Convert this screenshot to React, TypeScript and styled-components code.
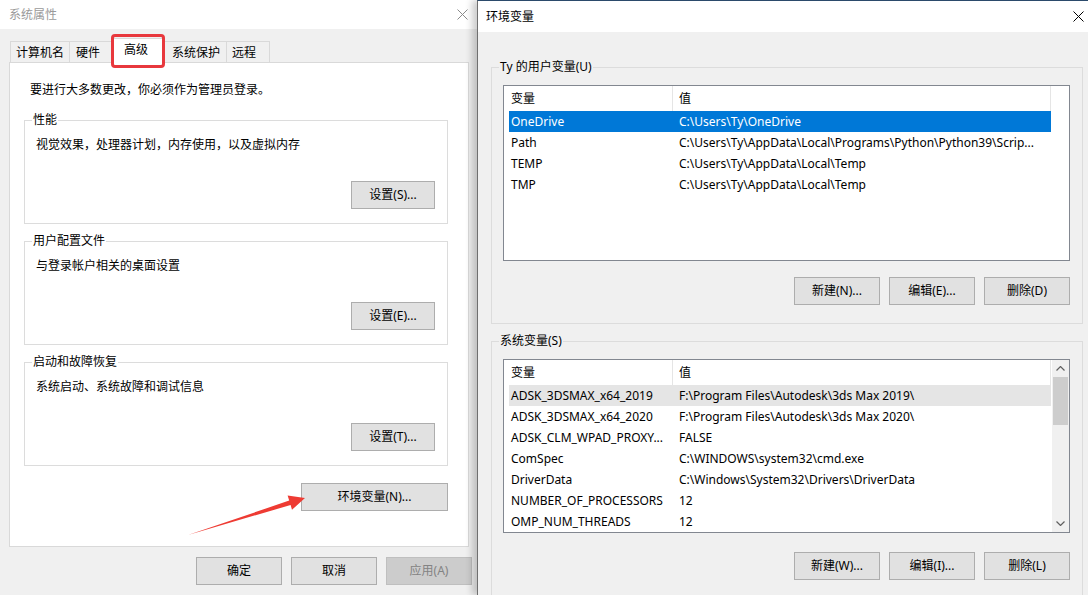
import { FC } from 'react';
import styled, { createGlobalStyle } from 'styled-components';

const GlobalStyle = createGlobalStyle`
  html, body {
    margin: 0;
    padding: 0;
  }
  body {
    font-family: "Noto Sans", "Noto Sans CJK SC", sans-serif;
    font-size: 12px;
    line-height: 16px;
    color: #000;
    background: #f0f0f0;
  }
`;

const Screen = styled.div`
  position: relative;
  display: flex;
  width: 1088px;
  height: 595px;
  overflow: hidden;
  background: #f0f0f0;
`;

const AnnotationLayer = styled.svg`
  position: absolute;
  left: 0;
  top: 0;
  width: 1088px;
  height: 595px;
  pointer-events: none;
  z-index: 5;
`;

/* ---------- window chrome ---------- */

const TitleBar = styled.div<{ $height: number; $inactive?: boolean; $right: number; $left: number }>`
  flex: none;
  height: ${({ $height }) => $height}px;
  display: flex;
  align-items: center;
  justify-content: space-between;
  padding: 0 ${({ $right }) => $right}px 0 ${({ $left }) => $left}px;
  background: #fff;
  color: ${({ $inactive }) => ($inactive ? '#9a9a9a' : '#000')};
`;

const CloseIcon: FC<{ color: string }> = ({ color }) => (
  <svg width="11" height="11" viewBox="0 0 11 11">
    <path d="M0.5 0.5 L10.5 10.5 M10.5 0.5 L0.5 10.5" stroke={color} strokeWidth="1" fill="none" />
  </svg>
);

const Button = styled.button<{ $width: number }>`
  box-sizing: border-box;
  flex: none;
  width: ${({ $width }) => $width}px;
  height: 28px;
  padding: 0;
  border: 1px solid #adadad;
  background: #e1e1e1;
  font: inherit;
  color: #000;
  line-height: 16px;

  &:disabled {
    background: #cccccc;
    border-color: #bfbfbf;
    color: #838383;
  }
`;

const GroupBox = styled.fieldset<{ $pad: string }>`
  box-sizing: border-box;
  margin: 0;
  min-width: 0;
  border: 1px solid #dcdcdc;
  padding: ${({ $pad }) => $pad};
  display: flex;
  flex-direction: column;
`;

const GroupLegend = styled.legend`
  padding: 0 1px;
  margin-left: -4px;
  height: 16px;
  line-height: 16px;
`;

const ButtonRow = styled.div<{ $top: number; $gap: number }>`
  display: flex;
  justify-content: flex-end;
  gap: ${({ $gap }) => $gap}px;
  margin-top: ${({ $top }) => $top}px;
`;

/* ---------- system properties (left) ---------- */

const LeftWindow = styled.section`
  flex: none;
  width: 477px;
  display: flex;
  flex-direction: column;
  background: #f0f0f0;
`;

const LeftBody = styled.div`
  display: flex;
  flex-direction: column;
  padding: 9px 5px 0 9px;
`;

const TabStrip = styled.div`
  display: flex;
  align-items: flex-start;
  height: 24px;
  padding-left: 1px;
`;

const Tab = styled.div<{ $width: number; $pad: number; $overlap: number; $active?: boolean }>`
  box-sizing: border-box;
  position: relative;
  z-index: ${({ $active }) => ($active ? 2 : 1)};
  width: ${({ $width }) => $width}px;
  height: ${({ $active }) => ($active ? 25 : 21)}px;
  margin: ${({ $active, $overlap }) => ($active ? '0' : `3px -${$overlap}px 0 0`)};
  border: 1px solid #d9d9d9;
  border-bottom: none;
  background: ${({ $active }) => ($active ? '#fff' : '#f0f0f0')};
  display: flex;
  align-items: center;
  padding: ${({ $active, $pad }) => ($active ? `0 0 3px ${$pad}px` : `1px 0 0 ${$pad}px`)};
  white-space: nowrap;

  ${({ $active }) =>
    $active &&
    `
    &::after {
      content: '';
      position: absolute;
      left: -3px;
      right: -3px;
      top: -5px;
      bottom: -5px;
      border: 3px solid #e8383d;
      border-radius: 4px;
    }
  `}
`;

const TabPanel = styled.div`
  box-sizing: border-box;
  width: 460px;
  height: 485px;
  background: #fff;
  border: 1px solid #d9d9d9;
  padding: 19px 0 0 14px;
  display: flex;
  flex-direction: column;
`;

const Notice = styled.div`
  margin: 0 0 14px 6px;
  height: 16px;
`;

const GroupStack = styled.div`
  width: 424px;
  display: flex;
  flex-direction: column;
  gap: 9px;
`;

const GroupText = styled.div`
  height: 16px;
  white-space: nowrap;
`;

/* ---------- environment variables (right) ---------- */

const RightWindow = styled.section`
  position: relative;
  z-index: 3;
  flex: 1;
  display: flex;
  flex-direction: column;
  border-left: 1px solid #6f6f6f;
  border-top: 1px solid #2b4a6b;
  background: #f0f0f0;
  box-shadow: -5px 0 7px rgba(0, 0, 0, 0.2);
  overflow: hidden;
`;

const RightBody = styled.div`
  display: flex;
  flex-direction: column;
  gap: 9px;
  padding: 27px 0 0 13px;
`;

const ListBox = styled.div<{ $height: number }>`
  box-sizing: border-box;
  height: ${({ $height }) => $height}px;
  border: 1px solid #828790;
  background: #fff;
  display: flex;
  overflow: hidden;
`;

const ListContent = styled.div`
  flex: 1;
  min-width: 0;
`;

const ListHeader = styled.div`
  display: flex;
  height: 25px;
`;

const HeaderCell = styled.div<{ $width: number; $pad: number }>`
  box-sizing: border-box;
  width: ${({ $width }) => $width}px;
  padding: 1px 0 0 ${({ $pad }) => $pad}px;
  border-right: 1px solid #e5e5e5;
  line-height: 24px;
`;

type RowState = 'none' | 'active' | 'muted';

const Row = styled.div<{ $state: RowState }>`
  display: flex;
  width: 542px;
  height: 21px;
  margin-left: 5px;
  line-height: 21px;
  white-space: nowrap;
  background: ${({ $state }) =>
    $state === 'active' ? '#0078d7' : $state === 'muted' ? '#e5e5e5' : 'transparent'};
  color: ${({ $state }) => ($state === 'active' ? '#fff' : '#000')};
`;

const Cell = styled.div<{ $width: number; $pad: number }>`
  box-sizing: border-box;
  width: ${({ $width }) => $width}px;
  padding-left: ${({ $pad }) => $pad}px;
  overflow: hidden;
`;

const ScrollBar = styled.div`
  flex: none;
  width: 17px;
  background: #f0f0f0;
  display: flex;
  flex-direction: column;
`;

const ScrollArrow = styled.div`
  height: 17px;
  display: flex;
  align-items: center;
  justify-content: center;
`;

const ScrollThumb = styled.div`
  height: 48px;
  margin: 0 1px;
  background: #cdcdcd;
`;

const ScrollTrack = styled.div`
  flex: 1;
`;

const Chevron: FC<{ down?: boolean }> = ({ down }) => (
  <svg width="9" height="5" viewBox="0 0 9 5">
    <path
      d={down ? 'M0.5 0.5 L4.5 4.5 L8.5 0.5' : 'M0.5 4.5 L4.5 0.5 L8.5 4.5'}
      stroke="#606060"
      strokeWidth="1.2"
      fill="none"
    />
  </svg>
);

interface EnvVar {
  name: string;
  value: string;
  state?: RowState;
}

const userVars: EnvVar[] = [
  { name: 'OneDrive', value: 'C:\\Users\\Ty\\OneDrive', state: 'active' },
  { name: 'Path', value: 'C:\\Users\\Ty\\AppData\\Local\\Programs\\Python\\Python39\\Scrip...' },
  { name: 'TEMP', value: 'C:\\Users\\Ty\\AppData\\Local\\Temp' },
  { name: 'TMP', value: 'C:\\Users\\Ty\\AppData\\Local\\Temp' },
];

const systemVars: EnvVar[] = [
  { name: 'ADSK_3DSMAX_x64_2019', value: 'F:\\Program Files\\Autodesk\\3ds Max 2019\\', state: 'muted' },
  { name: 'ADSK_3DSMAX_x64_2020', value: 'F:\\Program Files\\Autodesk\\3ds Max 2020\\' },
  { name: 'ADSK_CLM_WPAD_PROXY...', value: 'FALSE' },
  { name: 'ComSpec', value: 'C:\\WINDOWS\\system32\\cmd.exe' },
  { name: 'DriverData', value: 'C:\\Windows\\System32\\Drivers\\DriverData' },
  { name: 'NUMBER_OF_PROCESSORS', value: '12' },
  { name: 'OMP_NUM_THREADS', value: '12' },
];

const VarList: FC<{ vars: EnvVar[]; height: number; scroll?: boolean }> = ({ vars, height, scroll }) => (
  <ListBox $height={height}>
    <ListContent>
      <ListHeader>
        <HeaderCell $width={169} $pad={7}>变量</HeaderCell>
        <HeaderCell $width={378} $pad={6}>值</HeaderCell>
      </ListHeader>
      {vars.map((v) => (
        <Row key={v.name} $state={v.state ?? 'none'}>
          <Cell $width={164} $pad={2}>{v.name}</Cell>
          <Cell $width={378} $pad={6}>{v.value}</Cell>
        </Row>
      ))}
    </ListContent>
    {scroll && (
      <ScrollBar>
        <ScrollArrow><Chevron /></ScrollArrow>
        <ScrollThumb />
        <ScrollTrack />
        <ScrollArrow><Chevron down /></ScrollArrow>
      </ScrollBar>
    )}
  </ListBox>
);

const tabs = [
  { label: '计算机名', width: 60, pad: 5, overlap: 1 },
  { label: '硬件', width: 44, pad: 6, overlap: 0 },
  { label: '高级', width: 50, pad: 10, overlap: 0, active: true },
  { label: '系统保护', width: 64, pad: 8, overlap: 1 },
  { label: '远程', width: 44, pad: 5, overlap: 0 },
];

const groups = [
  { title: '性能', text: '视觉效果，处理器计划，内存使用，以及虚拟内存', button: '设置(S)...' },
  { title: '用户配置文件', text: '与登录帐户相关的桌面设置', button: '设置(E)...' },
  { title: '启动和故障恢复', text: '系统启动、系统故障和调试信息', button: '设置(T)...' },
];

const App: FC = () => (
  <>
    <GlobalStyle />
    <Screen>
      <LeftWindow>
        <TitleBar $height={29} $left={9} $right={9} $inactive>
          <span>系统属性</span>
          <CloseIcon color="#8a8a8a" />
        </TitleBar>
        <LeftBody>
          <TabStrip>
            {tabs.map((t) => (
              <Tab key={t.label} $width={t.width} $pad={t.pad} $overlap={t.overlap} $active={t.active}>
                {t.label}
              </Tab>
            ))}
          </TabStrip>
          <TabPanel>
            <Notice>要进行大多数更改，你必须作为管理员登录。</Notice>
            <GroupStack>
              {groups.map((g) => (
                <GroupBox key={g.title} $pad="9px 12px 14px 11px">
                  <GroupLegend>{g.title}</GroupLegend>
                  <GroupText>{g.text}</GroupText>
                  <ButtonRow $top={28} $gap={0}>
                    <Button $width={84}>{g.button}</Button>
                  </ButtonRow>
                </GroupBox>
              ))}
            </GroupStack>
            <ButtonRow $top={17} $gap={0} style={{ width: 424 }}>
              <Button $width={147}>环境变量(N)...</Button>
            </ButtonRow>
          </TabPanel>
          <ButtonRow $top={10} $gap={9}>
            <Button $width={86}>确定</Button>
            <Button $width={86}>取消</Button>
            <Button $width={86} disabled>应用(A)</Button>
          </ButtonRow>
        </LeftBody>
      </LeftWindow>

      <RightWindow>
        <TitleBar $height={31} $left={8} $right={4}>
          <span>环境变量</span>
          <CloseIcon color="#000" />
        </TitleBar>
        <RightBody>
          <GroupBox $pad="10px 12px 18px 11px" style={{ width: 592 }}>
            <GroupLegend>Ty 的用户变量(U)</GroupLegend>
            <VarList vars={userVars} height={176} />
            <ButtonRow $top={16} $gap={9}>
              <Button $width={86}>新建(N)...</Button>
              <Button $width={86}>编辑(E)...</Button>
              <Button $width={86}>删除(D)</Button>
            </ButtonRow>
          </GroupBox>
          <GroupBox $pad="10px 12px 40px 11px" style={{ width: 592 }}>
            <GroupLegend>系统变量(S)</GroupLegend>
            <VarList vars={systemVars} height={174} scroll />
            <ButtonRow $top={19} $gap={9}>
              <Button $width={86}>新建(W)...</Button>
              <Button $width={86}>编辑(I)...</Button>
              <Button $width={86}>删除(L)</Button>
            </ButtonRow>
          </GroupBox>
        </RightBody>
      </RightWindow>

      <AnnotationLayer viewBox="0 0 1088 595">
        <polygon
          points="188,535 289.2,500.6 287.6,495.5 305,498 292,509.8 290.6,505"
          fill="#ee3b33"
        />
      </AnnotationLayer>
    </Screen>
  </>
);

export default App;
